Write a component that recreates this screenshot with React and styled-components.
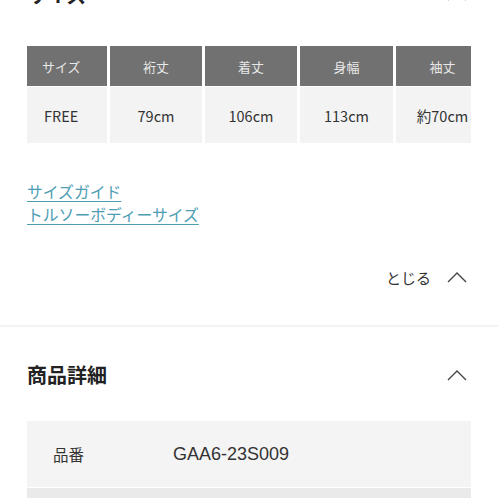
import React from "react";
import styled, { createGlobalStyle } from "styled-components";

const Global = createGlobalStyle`
  html, body { margin: 0; padding: 0; background: #fff; }
  body {
    font-family: "Noto Sans CJK JP", "Noto Sans", sans-serif;
    color: #333;
    overflow: hidden;
  }
`;

const Page = styled.div`
  width: 498px;
  height: 498px;
  overflow: hidden;
`;

const Section = styled.section`
  padding: 0 27px;
`;

const SectionHeader = styled.div`
  display: flex;
  align-items: center;
  justify-content: space-between;
  height: 40px;
  margin-top: ${(p) => p.$top}px;
`;

const Heading = styled.h2`
  margin: 0;
  font-size: 20px;
  font-weight: 700;
  line-height: 1;
  color: #222;
  letter-spacing: 0;
`;

const ChevronWrap = styled.span`
  display: flex;
  width: 20px;
  height: 12px;
  margin-right: 4px;
  color: #444;
`;

const Chevron = () => (
  <ChevronWrap>
    <svg width="20" height="12" viewBox="0 0 20 12" fill="none">
      <path d="M1 11 L10 2 L19 11" stroke="currentColor" strokeWidth="1.4" />
    </svg>
  </ChevronWrap>
);

const TableClip = styled.div`
  margin-top: ${(p) => p.$top}px;
  width: 444px;
  overflow: hidden;
`;

const SizeGrid = styled.div`
  display: grid;
  grid-template-columns: 80px 92px 92px 93px 93px;
  grid-template-rows: 40px 56px;
  column-gap: 3px;
  row-gap: 1px;
  width: max-content;
`;

const HeadCell = styled.div`
  background: #717171;
  color: #e8e8e8;
  font-size: 13px;
  display: flex;
  align-items: center;
  justify-content: ${(p) => (p.$first ? "flex-start" : "center")};
  padding-left: ${(p) => (p.$first ? "15px" : "0")};
`;

const BodyCell = styled.div`
  background: #f3f3f3;
  color: #333;
  font-size: 14.5px;
  display: flex;
  align-items: center;
  justify-content: ${(p) => (p.$first ? "flex-start" : "center")};
  padding-left: ${(p) => (p.$first ? "17px" : "0")};
`;

const Links = styled.div`
  margin-top: 37px;
  display: flex;
  flex-direction: column;
  align-items: flex-start;
`;

const LinkText = styled.a`
  font-size: 15.8px;
  line-height: 23px;
  color: #4d9db3;
  text-decoration: underline;
  text-underline-offset: 3px;
  text-decoration-thickness: 1px;
  cursor: pointer;
`;

const CloseRow = styled.div`
  margin-top: 39px;
  display: flex;
  justify-content: flex-end;
  align-items: center;
  gap: 16px;
  height: 24px;
`;

const CloseText = styled.span`
  font-size: 15px;
  color: #333;
`;

const Divider = styled.div`
  margin-top: 36px;
  height: 2px;
  background: #f4f4f4;
`;

const DetailTable = styled.div`
  margin-top: 26px;
  display: flex;
  flex-direction: column;
  gap: 1px;
`;

const DetailRow = styled.div`
  display: grid;
  grid-template-columns: 120px 1fr;
  align-items: center;
  height: 66px;
  padding-left: 26px;
  background: ${(p) => (p.$alt ? "#eaeaea" : "#f4f4f4")};
`;

const DetailLabel = styled.span`
  font-size: 15.5px;
  color: #333;
`;

const DetailValue = styled.span`
  font-family: "Liberation Sans", "Noto Sans", sans-serif;
  font-size: 18px;
  color: #333;
`;

const heads = ["サイズ", "裄丈", "着丈", "身幅", "袖丈"];
const vals = ["FREE", "79cm", "106cm", "113cm", "約70cm"];

export default function App() {
  return (
    <Page>
      <Global />
      <Section>
        <SectionHeader $top={-25}>
          <Heading>サイズ</Heading>
          <Chevron />
        </SectionHeader>
        <TableClip $top={31}>
          <SizeGrid>
            {heads.map((h, i) => (
              <HeadCell key={h} $first={i === 0}>{h}</HeadCell>
            ))}
            {vals.map((v, i) => (
              <BodyCell key={v} $first={i === 0}>{v}</BodyCell>
            ))}
          </SizeGrid>
        </TableClip>
        <Links>
          <LinkText>サイズガイド</LinkText>
          <LinkText>トルソーボディーサイズ</LinkText>
        </Links>
        <CloseRow>
          <CloseText>とじる</CloseText>
          <Chevron />
        </CloseRow>
      </Section>
      <Divider />
      <Section>
        <SectionHeader $top={28}>
          <Heading>商品詳細</Heading>
          <Chevron />
        </SectionHeader>
        <DetailTable>
          <DetailRow>
            <DetailLabel>品番</DetailLabel>
            <DetailValue>GAA6-23S009</DetailValue>
          </DetailRow>
          <DetailRow $alt>
            <DetailLabel>カラー</DetailLabel>
            <DetailValue></DetailValue>
          </DetailRow>
        </DetailTable>
      </Section>
    </Page>
  );
}
